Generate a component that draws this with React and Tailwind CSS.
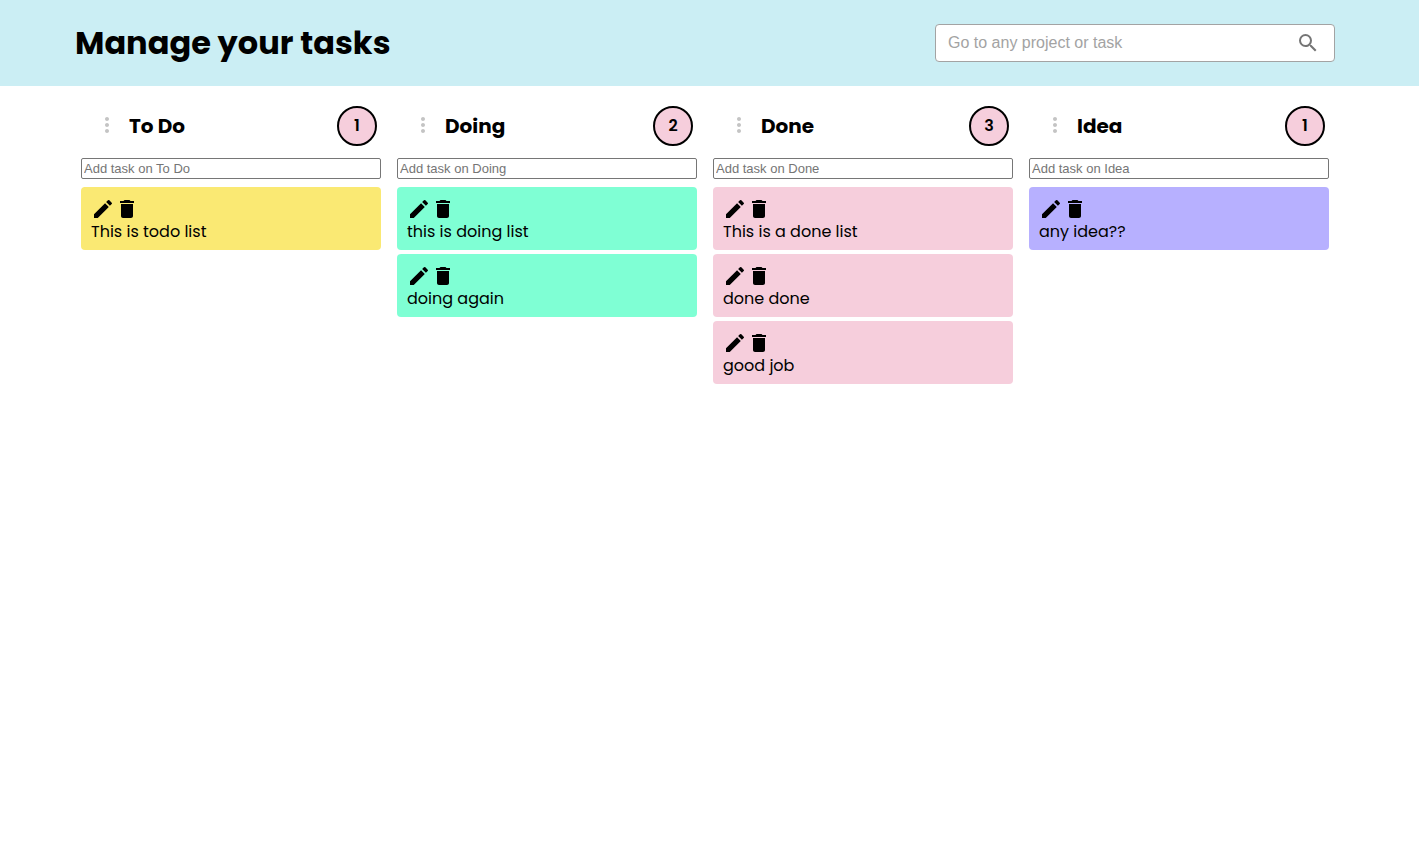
import { MdDelete, MdEdit, MdMoreVert, MdSearch } from "react-icons/md";

const columns = [
  { name: "To Do", color: "bg-[#fae973]", tasks: ["This is todo list"] },
  { name: "Doing", color: "bg-[#7fffd4]", tasks: ["this is doing list", "doing again"] },
  { name: "Done", color: "bg-[#f6cedc]", tasks: ["This is a done list", "done done", "good job"] },
  { name: "Idea", color: "bg-[#b7b0ff]", tasks: ["any idea??"] },
];

function Task({ text, color }) {
  return (
    <li className={`rounded px-[10px] pt-[10px] pb-2 ${color}`}>
      <div className="flex">
        <button type="button" aria-label="Edit task" className="cursor-pointer">
          <MdEdit size={24} />
        </button>
        <button type="button" aria-label="Delete task" className="cursor-pointer">
          <MdDelete size={24} />
        </button>
      </div>
      <p className="text-base leading-[21px]">{text}</p>
    </li>
  );
}

function Column({ name, color, tasks }) {
  return (
    <section>
      <div className="flex items-center pr-1 pl-[14px]">
        <button type="button" aria-label={`${name} options`} className="mb-0.5 cursor-pointer text-[#c4c4c4]">
          <MdMoreVert size={24} />
        </button>
        <h2 className="ml-[10px] text-xl font-bold">{name}</h2>
        <span className="ml-auto flex size-10 items-center justify-center rounded-full border-2 border-black bg-[#f6cedc] text-base font-semibold">
          {tasks.length}
        </span>
      </div>
      <input
        type="text"
        aria-label={`Add task on ${name}`}
        placeholder={`Add task on ${name}`}
        className="mt-3 block h-[21px] w-full rounded-[2px] border border-[#767676] bg-white px-[2px] font-['Liberation_Sans',Arial,sans-serif] text-[13px] placeholder:text-[#757575]"
      />
      <ul className="mt-2 flex flex-col gap-1">
        {tasks.map((task) => (
          <Task key={task} text={task} color={color} />
        ))}
      </ul>
    </section>
  );
}

export default function App() {
  return (
    <div className="min-h-screen bg-white font-[Poppins,Inter,sans-serif] text-black">
      <header className="bg-[#cbeef4] pr-[9px]">
        <div className="mx-auto flex max-w-[1260px] items-center justify-between gap-4 py-6">
          <h1 className="text-[32px] leading-[38px] font-bold">Manage your tasks</h1>
          <label className="flex h-[38px] w-[400px] items-center rounded border border-[#a3a3a3] bg-white pr-[14px] pl-3">
            <input
              type="text"
              aria-label="Search projects and tasks"
              placeholder="Go to any project or task"
              className="min-w-0 flex-1 font-['Liberation_Sans',Arial,sans-serif] text-base outline-none placeholder:text-[#a3a3a3]"
            />
            <MdSearch size={24} className="shrink-0 text-[#757575]" />
          </label>
        </div>
      </header>
      <main className="pr-[9px]">
        <div className="mx-auto grid max-w-[1260px] grid-cols-4 gap-4 px-[6px] pt-5">
          {columns.map((column) => (
            <Column key={column.name} {...column} />
          ))}
        </div>
      </main>
    </div>
  );
}
